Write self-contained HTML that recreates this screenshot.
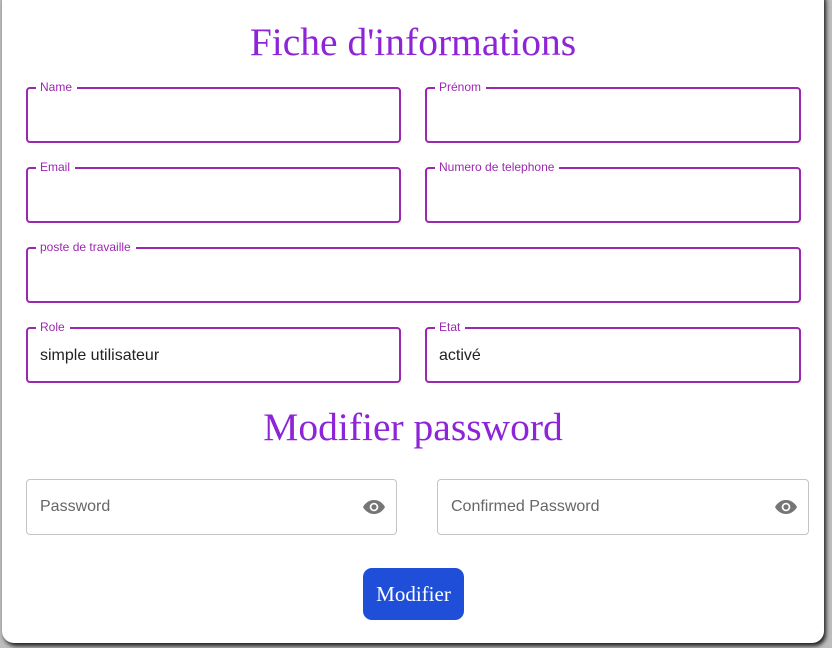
<!DOCTYPE html>
<html><head><meta charset="utf-8"><style>
html,body{margin:0;padding:0;width:832px;height:648px;overflow:hidden;background:#bdbdbd;}
.card{position:absolute;left:2px;top:-12px;width:822px;height:655px;background:#fff;border-radius:12px;box-shadow:2px 3px 4px rgba(0,0,0,.85);}
.t{position:absolute;left:0;width:826px;text-align:center;font-family:"Liberation Serif",serif;color:#8e24d8;font-size:39.5px;}
.f{position:absolute;height:52px;border:2px solid #9c27b0;border-radius:4px;box-sizing:content-box;}
.f span{position:absolute;left:8px;top:-10px;background:#fff;padding:0 5px 0 4px;font:12px "Liberation Sans",sans-serif;color:#9c27b0;line-height:16px;}
.f div{position:absolute;left:12px;top:18px;font:16px "Liberation Sans",sans-serif;color:#222;}
.p{position:absolute;height:54px;border:1px solid #c4c4c4;border-radius:4px;}
.p div{position:absolute;left:13px;top:18px;font:16px "Liberation Sans",sans-serif;color:#666;}
.p svg{position:absolute;right:10px;top:17px;}
.btn{position:absolute;left:363px;top:568px;width:101px;height:52px;background:#1f4fd9;border-radius:9px;color:#fff;font:21px "Liberation Serif",serif;text-align:center;line-height:52px;}
</style></head><body>
<div class="card"></div>
<div class="t" style="top:19px;">Fiche d'informations</div>
<div class="f" style="left:26px;top:87px;width:371px;"><span>Name</span></div>
<div class="f" style="left:425px;top:87px;width:372px;"><span>Prénom</span></div>
<div class="f" style="left:26px;top:167px;width:371px;"><span>Email</span></div>
<div class="f" style="left:425px;top:167px;width:372px;"><span>Numero de telephone</span></div>
<div class="f" style="left:26px;top:247px;width:771px;"><span>poste de travaille</span></div>
<div class="f" style="left:26px;top:327px;width:371px;"><span>Role</span><div>simple utilisateur</div></div>
<div class="f" style="left:425px;top:327px;width:372px;"><span>Etat</span><div>activé</div></div>
<div class="t" style="top:404px;">Modifier password</div>
<div class="p" style="left:26px;top:479px;width:369px;"><div>Password</div>
<svg width="24" height="20" viewBox="0 0 24 20"><path d="M12 3C6.5 3 2.5 7 1 10c1.5 3 5.5 7 11 7s9.5-4 11-7c-1.5-3-5.5-7-11-7z" fill="#757575"/><circle cx="12" cy="10" r="4.3" fill="#fff"/><circle cx="12" cy="10" r="2.6" fill="#757575"/></svg></div>
<div class="p" style="left:437px;top:479px;width:370px;"><div>Confirmed Password</div>
<svg width="24" height="20" viewBox="0 0 24 20"><path d="M12 3C6.5 3 2.5 7 1 10c1.5 3 5.5 7 11 7s9.5-4 11-7c-1.5-3-5.5-7-11-7z" fill="#757575"/><circle cx="12" cy="10" r="4.3" fill="#fff"/><circle cx="12" cy="10" r="2.6" fill="#757575"/></svg></div>
<div class="btn">Modifier</div>
</body></html>
